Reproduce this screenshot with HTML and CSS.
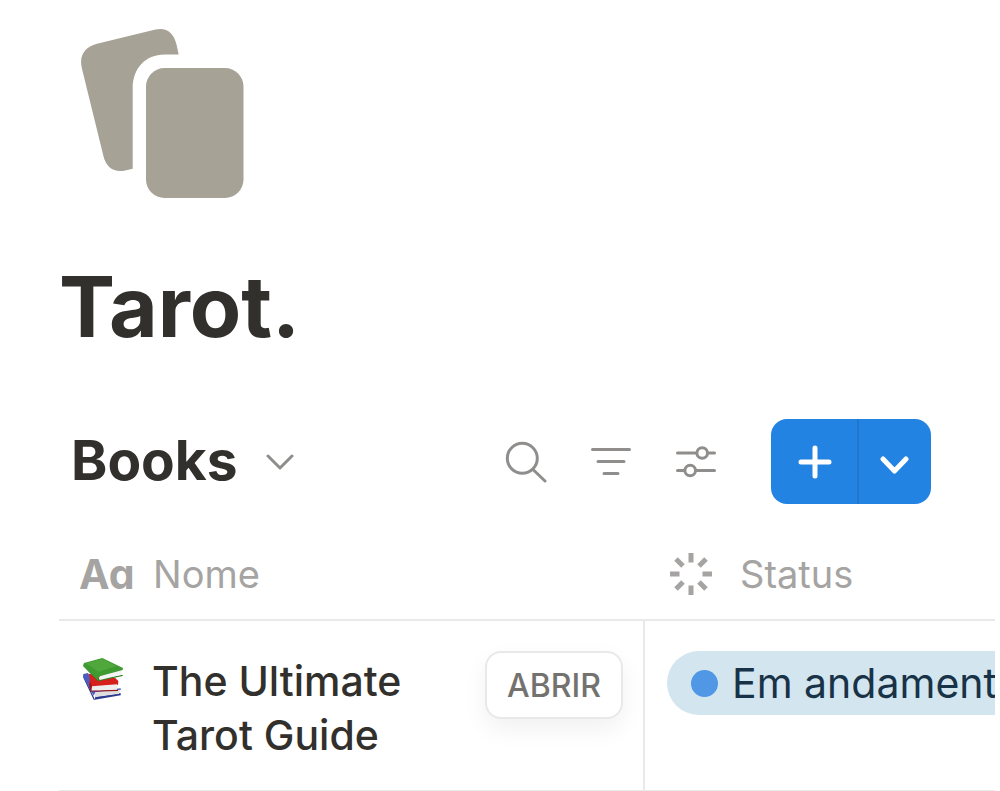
FILE: index.html
```
<!DOCTYPE html>
<html lang="pt">

<head>
    <meta charset="UTF-8">
    <meta name="viewport" content="width=device-width, initial-scale=1.0">
    <title>Tarot.</title>
    <link rel="stylesheet" href="styles.css">
</head>

<body>
    <main class="page">
        <svg class="page-icon" viewBox="80 28 164 171" aria-hidden="true">
            <path d="M178.700 54.500L176.500 44.500C173.500 32 166 26.800 154.500 29.700L97 43.800C84.500 47 79 56 81.800 68L103.300 155.500C106 167.500 114 172.500 124 170.700L132.700 168.700V88C132.700 68.500 145.500 54.500 164.500 54.500Z" />
            <rect x="146" y="68" width="97.500" height="130" rx="18.500" />
        </svg>
        <h1 class="page-title">Tarot.</h1>

        <div class="toolbar">
            <h2 class="view-title">Books</h2>
            <button class="icon-button view-menu" aria-label="Views">
                <svg width="28" height="28" viewBox="0 0 28 28">
                    <path d="M2 8L14 20L26 8" />
                </svg>
            </button>
            <div class="tools">
                <button class="icon-button" aria-label="Search">
                    <svg width="42" height="42" viewBox="0 0 42 42">
                        <circle cx="17.300" cy="17.300" r="15" />
                        <path d="M28 28.500L40 40" />
                    </svg>
                </button>
                <button class="icon-button" aria-label="Filter">
                    <svg width="42" height="42" viewBox="0 0 42 42">
                        <path d="M2.500 8.500H39.500M8 20.500H34M14 32.500H28" />
                    </svg>
                </button>
                <button class="icon-button" aria-label="Settings">
                    <svg width="42" height="42" viewBox="0 0 42 42">
                        <path d="M2.500 12H21.500M33 12H39.500M2.500 29.500H9.500M21 29.500H39.500" />
                        <circle cx="27.200" cy="12" r="5.300" />
                        <circle cx="15.200" cy="29.500" r="5.300" />
                    </svg>
                </button>
            </div>
            <div class="new-group">
                <button class="new-button" aria-label="New">
                    <svg width="36" height="36" viewBox="0 0 36 36">
                        <path d="M19 4V32M5 18H33" />
                    </svg>
                </button>
                <button class="new-button new-more" aria-label="More">
                    <svg width="30" height="30" viewBox="0 0 30 30">
                        <path d="M3 12L14.500 24L26 12" />
                    </svg>
                </button>
            </div>
        </div>

        <div class="table-wrap">
            <table class="books">
                <thead>
                    <tr>
                        <th class="col-name">
                            <div class="head">
                                <span class="type-text">Aa</span>
                                <span>Nome</span>
                            </div>
                        </th>
                        <th>
                            <div class="head head-status">
                                <svg class="type-status" width="42" height="42" viewBox="0 0 42 42" aria-hidden="true">
                                    <path d="M21 0V9.500M21 32.500V42M0 21H9.500M32.500 21H42M6 6L13 13M29 29L36 36M36 6L29 13M13 29L6 36" />
                                </svg>
                                <span>Status</span>
                            </div>
                        </th>
                    </tr>
                </thead>
                <tbody>
                    <tr>
                        <td class="cell-name">
                            <div class="name">
                                <svg class="book-icon" width="42" height="44" viewBox="66 50 126 132" aria-hidden="true">
                                    <!-- blue book -->
                                    <path fill="#2b3990" d="M69 102L104 176L181 162L182 158L107 168L103 180L101 178L70 112Z" />
                                    <path fill="#4a5cc0" d="M70 101L84 98L112 152L182 144L182 149L106 156L101 166L70 110Z" />
                                    <path fill="#dedede" d="M107 156L180 148L177 161L107 171Q103 162 107 156Z" />
                                    <path fill="#2b3990" d="M104 178L182 165L182 160L107 171Z" />
                                    <!-- red book -->
                                    <path fill="#d5201c" d="M86 100L165 112L175 122L174 134L92 139Q84 128 90 120Z" />
                                    <path fill="#eeeeee" d="M95 138L172 132L171 149L95 151Q90 144 95 138Z" />
                                    <path fill="#9c1518" d="M90 124L96 138L94 151L174 148V152L93 154Q87 146 88 134Z" />
                                    <!-- green book -->
                                    <path fill="#2e7f23" d="M72 68L70 78L114 123L188 107V103L117 116Z" />
                                    <path fill="#f4f4f4" d="M119 108L186 89L183 104L119 119Q114 113 119 108Z" />
                                    <path fill="#3f9a31" d="M72 68L127 53L189 83L188 89L119 108Q112 112 116 122L70 77Z" />
                                    <path fill="#50a83d" d="M78 69L127 56L170 77L115 94Z" />
                                </svg>
                                <span class="book-title">The Ultimate Tarot Guide</span>
                                <button class="open-button">ABRIR</button>
                            </div>
                        </td>
                        <td class="cell-status">
                            <span class="status"><span class="dot"></span>Em andamento</span>
                        </td>
                    </tr>
                </tbody>
            </table>
        </div>
    </main>
</body>

</html>
```
FILE: styles.css
```
* {
    box-sizing: border-box;
}

body {
    margin: 0;
    background-color: #fff;
    color: #32302c;
    font-family: Inter, "Liberation Sans", sans-serif;
    overflow-x: hidden;
}

h1,
h2 {
    margin: 0;
    font-weight: 700;
}

button {
    margin: 0;
    padding: 0;
    border: none;
    background: none;
    font-family: inherit;
    cursor: pointer;
}

svg {
    display: block;
    flex: none;
}

.page {
    padding: 28px 5px 0 59px;
}

.page-icon {
    width: 164px;
    margin-left: 21px;
    fill: #a6a296;
}

.page-title {
    margin-top: 56px;
    font-size: 84px;
    line-height: 104px;
}

.toolbar {
    display: flex;
    align-items: center;
    margin-top: 60px;
    padding: 0 64px 0 12px;
}

.view-title {
    padding-bottom: 4px;
    font-size: 55px;
    line-height: 80px;
}

.view-menu {
    margin-left: 28px;
}

.icon-button svg {
    fill: none;
    stroke: #8f8e8c;
    stroke-width: 3;
    stroke-linecap: round;
    stroke-linejoin: round;
}

.tools {
    display: flex;
    gap: 43px;
    margin-left: auto;
}

.new-group {
    display: flex;
    height: 85px;
    margin-left: 54px;
    border-radius: 16px;
    background-color: #2383e2;
    overflow: hidden;
}

.new-button {
    display: flex;
    align-items: center;
    justify-content: center;
    width: 88px;
}

.new-button svg {
    fill: none;
    stroke: #fff;
    stroke-width: 5;
    stroke-linecap: round;
    stroke-linejoin: round;
}

.new-more {
    width: 72px;
}

.new-button:first-child {
    border-right: 2px solid #2076cb;
}

.table-wrap {
    margin-top: 24px;
    overflow: hidden;
}

.books {
    width: 100%;
    table-layout: fixed;
    border-collapse: separate;
    border-spacing: 0;
}

.books th,
.books td {
    padding: 0;
    border-bottom: 2px solid #e9e9e7;
    text-align: left;
    vertical-align: top;
}

.col-name {
    width: 586px;
}

.head {
    display: flex;
    align-items: center;
    height: 91px;
    padding-left: 20px;
    color: #a5a4a2;
    font-size: 38px;
    font-weight: 400;
}

.head-status {
    gap: 28px;
    padding-left: 25px;
}

.type-text {
    width: 74px;
    font-size: 41px;
    font-weight: 700;
    font-feature-settings: "cv11";
}

.type-status {
    fill: none;
    stroke: #a5a4a2;
    stroke-width: 5;
}

.cell-name {
    border-right: 2px solid #e9e9e7;
}

.name {
    display: flex;
    align-items: flex-start;
    padding: 30px 20px 28px 23px;
}

.book-icon {
    margin-top: 6px;
}

.book-title {
    flex: 1;
    margin: 3px 28px 0;
    font-size: 41px;
    font-weight: 500;
    line-height: 54px;
}

.open-button {
    height: 68px;
    padding: 0 20px;
    border: 2px solid #e9e9e8;
    border-radius: 16px;
    background-color: #fff;
    box-shadow: 0 10px 24px rgba(15, 15, 15, 0.06);
    color: #73726e;
    font-size: 32px;
    font-weight: 500;
}

.cell-status {
    overflow: hidden;
}

.status {
    display: inline-flex;
    align-items: center;
    height: 64px;
    margin: 30px 0 0 22px;
    padding: 0 24px;
    border-radius: 32px;
    background-color: #d3e5ef;
    color: #183347;
    font-size: 41px;
    white-space: nowrap;
}

.dot {
    width: 27px;
    height: 27px;
    margin-right: 14px;
    border-radius: 50%;
    background-color: #5097e5;
}
```
